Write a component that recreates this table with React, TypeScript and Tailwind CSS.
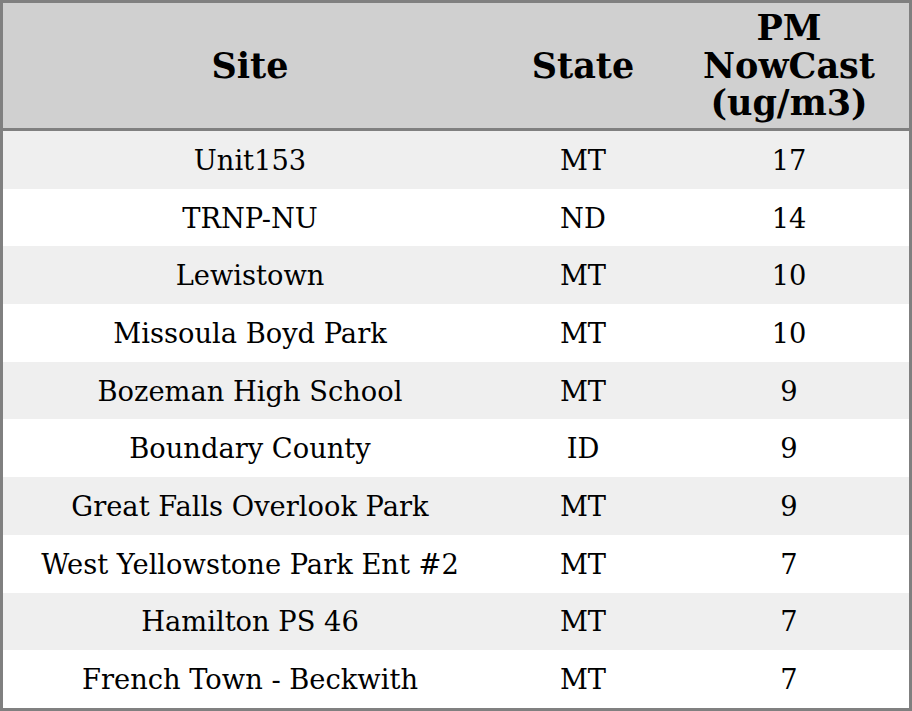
const rows = [
  { site: "Unit153", state: "MT", pm: 17 },
  { site: "TRNP-NU", state: "ND", pm: 14 },
  { site: "Lewistown", state: "MT", pm: 10 },
  { site: "Missoula Boyd Park", state: "MT", pm: 10 },
  { site: "Bozeman High School", state: "MT", pm: 9 },
  { site: "Boundary County", state: "ID", pm: 9 },
  { site: "Great Falls Overlook Park", state: "MT", pm: 9 },
  { site: "West Yellowstone Park Ent #2", state: "MT", pm: 7 },
  { site: "Hamilton PS 46", state: "MT", pm: 7 },
  { site: "French Town - Beckwith", state: "MT", pm: 7 },
]

export default function App() {
  return (
    <div
      className="w-[912px] h-[711px] border-[3px] border-[#808080] bg-white text-black"
      style={{ fontFamily: '"DejaVu Serif", serif' }}
    >
      <div className="grid grid-cols-[494px_172px_240px] h-[128px] bg-[#d0d0d0] border-b-[3px] border-[#808080] text-[35px] font-bold leading-[37.5px]">
        <div className="flex items-center justify-center">Site</div>
        <div className="flex items-center justify-center">State</div>
        <div className="flex items-center justify-center text-center">
          PM
          <br />
          NowCast
          <br />
          (ug/m3)
        </div>
      </div>
      {rows.map((r, i) => (
        <div
          key={r.site}
          className={`grid grid-cols-[494px_172px_240px] h-[57.7px] items-center pt-[3px] text-[27.3px] ${
            i % 2 === 0 ? "bg-[#efefef]" : "bg-white"
          }`}
        >
          <div className="text-center">{r.site}</div>
          <div className="text-center">{r.state}</div>
          <div className="text-center">{r.pm}</div>
        </div>
      ))}
    </div>
  )
}
